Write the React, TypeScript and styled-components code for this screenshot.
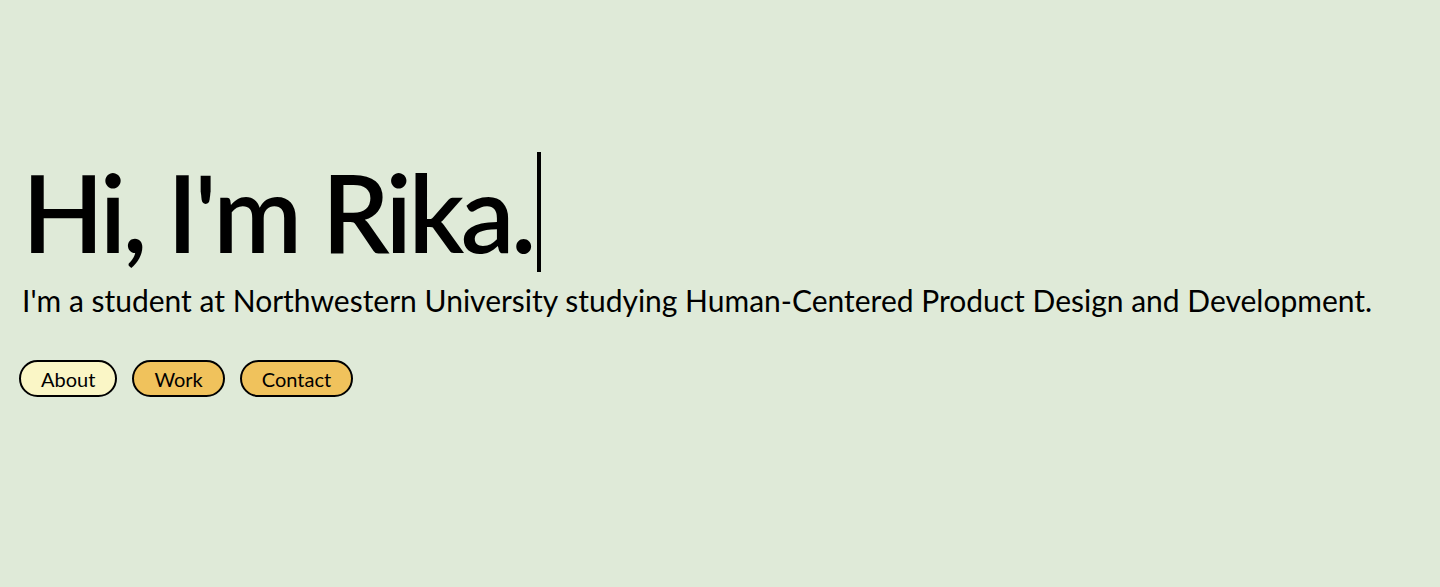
import React from "react";
import styled, { createGlobalStyle } from "styled-components";

const GlobalStyle = createGlobalStyle`
  html, body {
    margin: 0;
    padding: 0;
    background: #dfead8;
  }
  body {
    font-family: Lato, "Open Sans", sans-serif;
    color: #000;
  }
`;

const Page = styled.main`
  min-height: 587px;
  box-sizing: border-box;
  padding: 152px 19px 0 19px;
  display: flex;
  flex-direction: column;
`;

const HeadingRow = styled.div`
  display: flex;
  align-items: flex-start;
`;

const Heading = styled.h1`
  margin: 0;
  font-family: Lato, sans-serif;
  font-weight: 600;
  font-size: 107px;
  line-height: 120px;
  letter-spacing: -3.5px;
  padding-left: 3px;
`;

const Cursor = styled.span`
  display: inline-block;
  width: 4px;
  height: 120px;
  background: #000;
  margin-left: 4px;
`;

const Subtitle = styled.p`
  margin: 10px 0 0 0;
  font-family: Lato, sans-serif;
  font-size: 30px;
  line-height: 36px;
  padding-left: 3px;
`;

const ButtonRow = styled.nav`
  display: flex;
  gap: 15px;
  margin-top: 42px;
`;

const Pill = styled.button<{ $light?: boolean }>`
  font-family: Lato, sans-serif;
  font-size: 20px;
  height: 37px;
  padding: 0 20px;
  margin: 0;
  border: 2px solid #000;
  border-radius: 20px;
  background: ${(p) => (p.$light ? "#faf6c6" : "#f0c25c")};
  color: #000;
  cursor: pointer;
`;

export default function App() {
  return (
    <>
      <GlobalStyle />
      <Page>
        <HeadingRow>
          <Heading>Hi, I'm Rika.</Heading>
          <Cursor />
        </HeadingRow>
        <Subtitle>
          I'm a student at Northwestern University studying Human-Centered Product Design and Development.
        </Subtitle>
        <ButtonRow>
          <Pill $light>About</Pill>
          <Pill>Work</Pill>
          <Pill>Contact</Pill>
        </ButtonRow>
      </Page>
    </>
  );
}
